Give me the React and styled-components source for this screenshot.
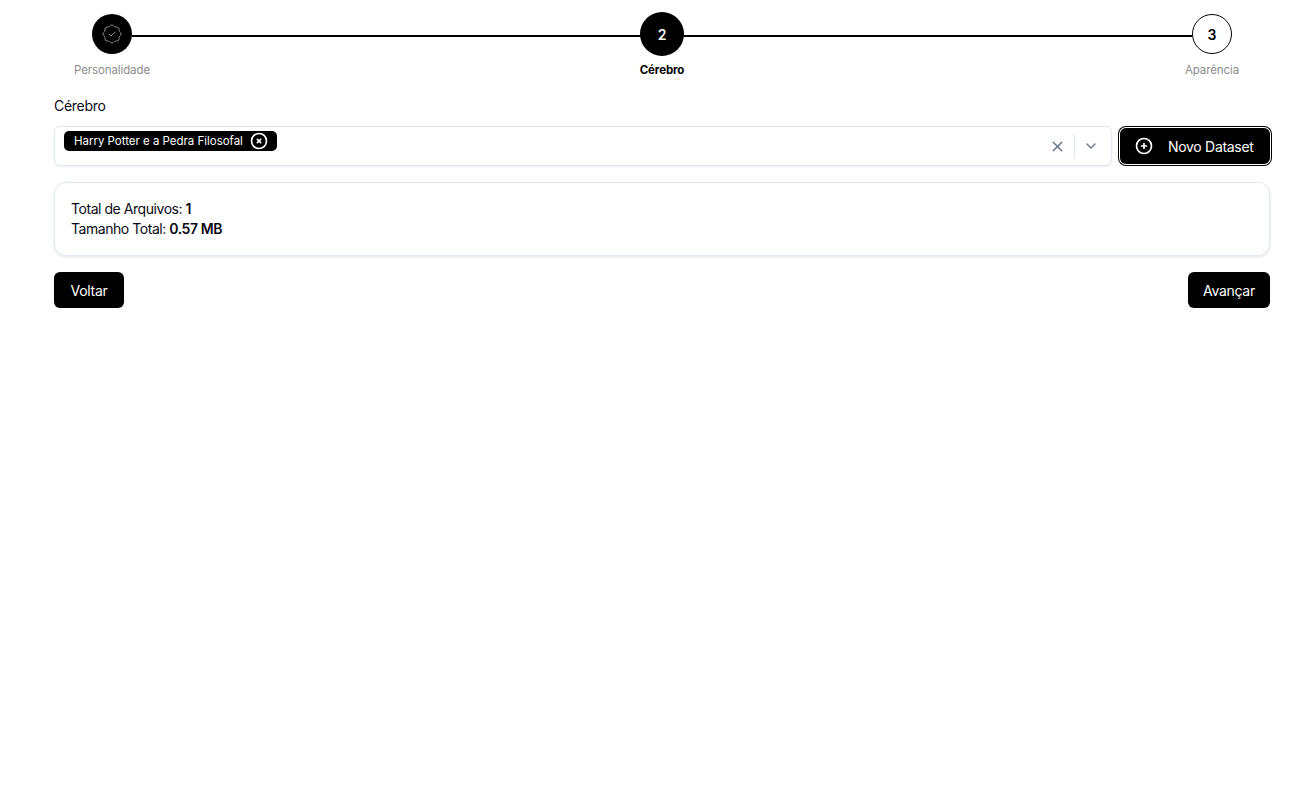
import React from "react";
import styled, { createGlobalStyle } from "styled-components";
import { TbRosetteDiscountCheck, TbCircleX, TbCirclePlus, TbX, TbChevronDown } from "react-icons/tb";

const GlobalStyle = createGlobalStyle`
  html, body {
    margin: 0;
    background: #fff;
    font-family: "Inter", "Liberation Sans", sans-serif;
    color: #0a0a14;
  }
`;

const Page = styled.div`
  padding: 12px 26px 0 54px;
  display: flex;
  flex-direction: column;
`;

const Stepper = styled.div`
  display: flex;
  align-items: flex-start;
`;

const Step = styled.div`
  width: 116px;
  flex: none;
  display: flex;
  flex-direction: column;
  align-items: center;
  position: relative;
  z-index: 1;
`;

const CircleSlot = styled.div`
  height: 44px;
  display: flex;
  align-items: center;
`;

const Circle = styled.div`
  box-sizing: border-box;
  width: ${(p) => (p.$active ? 44 : 40)}px;
  height: ${(p) => (p.$active ? 44 : 40)}px;
  border-radius: 50%;
  display: flex;
  align-items: center;
  justify-content: center;
  background: ${(p) => (p.$light ? "#fff" : "#000")};
  border: ${(p) => (p.$light ? "1px solid #000" : "none")};
  color: ${(p) => (p.$light ? "#000" : "#fff")};
  font-size: 14px;
  font-weight: 600;
`;

const StepLabel = styled.div`
  margin-top: 7px;
  font-size: 11.5px;
  line-height: 15px;
  white-space: nowrap;
  letter-spacing: -0.1px;
  font-weight: ${(p) => (p.$active ? 700 : 400)};
  color: ${(p) => (p.$active ? "#000" : "#8c8c8c")};
`;

const Connector = styled.div`
  flex: 1;
  height: 2px;
  margin: 23px -38px 0;
  background: #000;
`;

const FieldLabel = styled.div`
  margin-top: 18px;
  font-size: 14px;
  line-height: 20px;
  letter-spacing: -0.3px;
`;

const FieldRow = styled.div`
  margin-top: 10px;
  display: flex;
  gap: 8px;
`;

const SelectBox = styled.div`
  box-sizing: border-box;
  flex: 1;
  height: 40px;
  padding: 4px 4px 4px 9px;
  display: flex;
  align-items: flex-start;
  justify-content: space-between;
  background: #fff;
  border: 1px solid #e2e8f0;
  border-radius: 6px;
  box-shadow: 0 1px 2px rgba(15, 23, 42, 0.08);
`;

const Chip = styled.div`
  height: 20px;
  padding: 0 10px;
  display: flex;
  align-items: center;
  gap: 6px;
  background: #000;
  color: #fff;
  border-radius: 5px;
  font-size: 11.5px;
  letter-spacing: -0.02px;
  white-space: nowrap;
  svg {
    font-size: 20px;
    margin-right: -2px;
  }
`;

const SelectControls = styled.div`
  display: flex;
  align-items: center;
  height: 30px;
  color: #64748b;
`;

const ControlIcon = styled.span`
  display: flex;
  font-size: ${(p) => p.$size}px;
  padding: 0 ${(p) => p.$pad}px;
`;

const Divider = styled.span`
  width: 1px;
  height: 24px;
  background: #e2e8f0;
`;

const PrimaryButton = styled.button`
  box-sizing: border-box;
  width: ${(p) => p.$width}px;
  height: 36px;
  padding: 0;
  border: none;
  border-radius: 6px;
  background: #000;
  color: #fff;
  font-family: inherit;
  font-size: 14px;
  letter-spacing: -0.3px;
  white-space: nowrap;
  display: flex;
  align-items: center;
  justify-content: center;
  box-shadow: 0 1px 2px rgba(15, 23, 42, 0.1);
`;

const DatasetButton = styled(PrimaryButton)`
  flex: none;
  margin: 2px 0;
  padding: 0 14px;
  justify-content: flex-start;
  gap: 14px;
  box-shadow: 0 0 0 1px #fff, 0 0 0 2px #000;
  svg {
    font-size: 20px;
  }
`;

const Panel = styled.div`
  box-sizing: border-box;
  margin-top: 16px;
  padding: 16px;
  border: 1px solid #e2e8f0;
  border-radius: 12px;
  box-shadow: 0 1px 3px rgba(15, 23, 42, 0.12);
  font-size: 14px;
  line-height: 20px;
  letter-spacing: -0.45px;
  b {
    font-weight: 600;
  }
`;

const Actions = styled.div`
  margin-top: 16px;
  display: flex;
  justify-content: space-between;
`;

export default function App() {
  return (
    <>
      <GlobalStyle />
      <Page>
        <Stepper>
          <Step>
            <CircleSlot>
              <Circle>
                <TbRosetteDiscountCheck size={24} color="#8a8a8a" strokeWidth={1} />
              </Circle>
            </CircleSlot>
            <StepLabel>Personalidade</StepLabel>
          </Step>
          <Connector />
          <Step>
            <CircleSlot>
              <Circle $active>2</Circle>
            </CircleSlot>
            <StepLabel $active>Cérebro</StepLabel>
          </Step>
          <Connector />
          <Step>
            <CircleSlot>
              <Circle $light>3</Circle>
            </CircleSlot>
            <StepLabel>Aparência</StepLabel>
          </Step>
        </Stepper>

        <FieldLabel>Cérebro</FieldLabel>
        <FieldRow>
          <SelectBox>
            <Chip>
              Harry Potter e a Pedra Filosofal
              <TbCircleX />
            </Chip>
            <SelectControls>
              <ControlIcon $size={17} $pad={8}>
                <TbX />
              </ControlIcon>
              <Divider />
              <ControlIcon $size={16} $pad={8}>
                <TbChevronDown />
              </ControlIcon>
            </SelectControls>
          </SelectBox>
          <DatasetButton $width={150}>
            <TbCirclePlus />
            Novo Dataset
          </DatasetButton>
        </FieldRow>

        <Panel>
          <div>
            Total de Arquivos: <b>1</b>
          </div>
          <div>
            Tamanho Total: <b>0.57 MB</b>
          </div>
        </Panel>

        <Actions>
          <PrimaryButton $width={70}>Voltar</PrimaryButton>
          <PrimaryButton $width={82}>Avançar</PrimaryButton>
        </Actions>
      </Page>
    </>
  );
}
